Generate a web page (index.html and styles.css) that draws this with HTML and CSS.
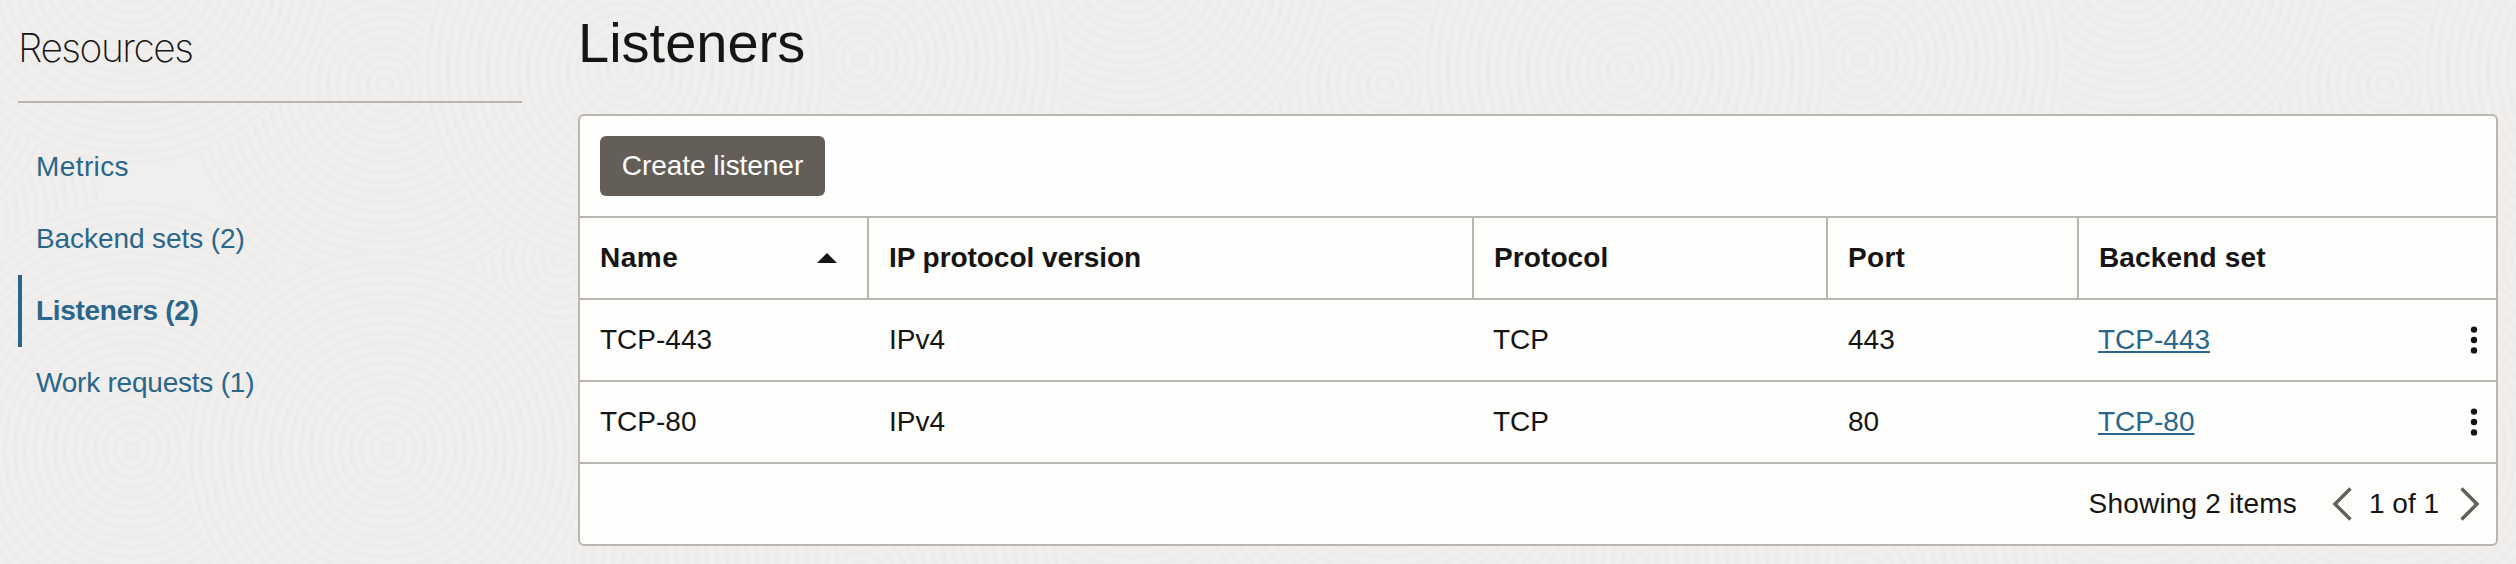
FILE: index.html
```html
<!DOCTYPE html>
<html lang="en">
<head>
<meta charset="utf-8">
<title>Listeners</title>
<link rel="stylesheet" href="styles.css">
</head>
<body>
<svg class="texture" width="2516" height="564" aria-hidden="true">
  <defs>
    <radialGradient id="ripple" gradientUnits="userSpaceOnUse" cx="0" cy="0" r="10" spreadMethod="repeat">
      <stop offset="0" stop-color="#f0efee"/>
      <stop offset=".4" stop-color="#f0efee"/>
      <stop offset=".75" stop-color="#ecebea"/>
      <stop offset="1" stop-color="#f0efee"/>
    </radialGradient>
    <ellipse id="rings" rx="205" ry="200" fill="url(#ripple)"/>
    <g id="tile">
      <use href="#rings" x="860" y="580"/>
      <use href="#rings" x="900" y="220"/>
      <use href="#rings" x="860" y="60"/>
      <use href="#rings" x="640" y="560"/>
      <use href="#rings" x="560" y="260"/>
      <use href="#rings" x="385" y="85"/>
      <use href="#rings" x="625" y="70"/>
      <use href="#rings" x="130" y="-35"/>
      <use href="#rings" x="388" y="650"/>
      <use href="#rings" x="132" y="400"/>
      <use href="#rings" x="132" y="450"/>
      <use href="#rings" x="388" y="450"/>
    </g>
  </defs>
  <use href="#tile" x="-1000"/>
  <use href="#tile" x="2000"/>
  <use href="#tile" x="1000"/>
  <use href="#tile"/>
</svg>
<div class="page">
  <aside class="sidebar">
    <h2 class="sidebar-title">Resources</h2>
    <nav class="nav">
      <a class="nav-item nav-metrics">Metrics</a>
      <a class="nav-item nav-sets">Backend sets (2)</a>
      <a class="nav-item active">Listeners (2)</a>
      <a class="nav-item nav-requests">Work requests (1)</a>
    </nav>
  </aside>
  <main class="content">
    <h1 class="title">Listeners</h1>
    <section class="panel">
      <div class="toolbar"><button class="create">Create listener</button></div>
      <div class="row header">
        <div class="cell name">Name
          <svg width="20" height="10" viewBox="0 0 20 10"><path d="M0 10 10 0l10 10z" fill="#161513"/></svg>
        </div>
        <div class="cell version">IP protocol version</div>
        <div class="cell protocol">Protocol</div>
        <div class="cell port">Port</div>
        <div class="cell backend">Backend set</div>
      </div>
      <div class="row">
        <div class="cell">TCP-443</div>
        <div class="cell wide">IPv4</div>
        <div class="cell">TCP</div>
        <div class="cell wide">443</div>
        <div class="cell"><a class="link">TCP-443</a>
          <svg class="dots" width="8" height="28" viewBox="0 0 8 28" fill="#161513"><circle cx="4" cy="3.6" r="3.2"/><circle cx="4" cy="14" r="3.2"/><circle cx="4" cy="24.4" r="3.2"/></svg>
        </div>
      </div>
      <div class="row">
        <div class="cell">TCP-80</div>
        <div class="cell wide">IPv4</div>
        <div class="cell">TCP</div>
        <div class="cell wide">80</div>
        <div class="cell"><a class="link">TCP-80</a>
          <svg class="dots" width="8" height="28" viewBox="0 0 8 28" fill="#161513"><circle cx="4" cy="3.6" r="3.2"/><circle cx="4" cy="14" r="3.2"/><circle cx="4" cy="24.4" r="3.2"/></svg>
        </div>
      </div>
      <div class="footer">
        <span class="count">Showing 2 items</span>
        <svg class="chevron" width="20" height="34" viewBox="0 0 20 34"><path d="M18.5 1.5 3 17l15.500 15.500" /></svg>
        <span class="pages">1 of 1</span>
        <svg class="chevron" width="20" height="34" viewBox="0 0 20 34"><path d="M1.500 1.500 17 17 1.500 32.500" /></svg>
      </div>
    </section>
  </main>
</div>
</body>
</html>
```
FILE: styles.css
```css
* { box-sizing: border-box; }

body {
  margin: 0;
  height: 564px;
  overflow: hidden;
  background: #f0efee;
  color: #161513;
  font: 28px/40px "Liberation Sans", Arial, sans-serif;
}

.texture {
  position: absolute;
  inset: 0;
  z-index: -1;
}

.page {
  display: grid;
  grid-template-columns: 504px 1920px;
  column-gap: 56px;
  padding-left: 18px;
}

.sidebar-title {
  margin: 0;
  height: 103px;
  padding-top: 24px;
  border-bottom: 2px solid #bbb5b0;
  font: 200 39px/48px Inter, "Liberation Sans", sans-serif;
  letter-spacing: -1.5px;
}

.nav {
  display: flex;
  flex-direction: column;
  padding-top: 28px;
}

.nav-item {
  height: 72px;
  padding-left: 14px;
  border-left: 4px solid transparent;
  line-height: 72px;
  color: #2a668a;
}

.nav-metrics { letter-spacing: 0.4px; }
.nav-sets { letter-spacing: -0.08px; }
.nav-requests { letter-spacing: -0.22px; }

.active {
  border-color: #2a668a;
  font-weight: bold;
  letter-spacing: -0.3px;
}

.title {
  margin: 0;
  height: 114px;
  padding-top: 11px;
  font-size: 56px;
  font-weight: normal;
  line-height: 64px;
}

.panel {
  height: 432px;
  border: 2px solid #bbb5b0;
  border-radius: 6px;
  background: #fdfdfc;
}

.toolbar {
  height: 100px;
  padding: 20px;
}

.create {
  width: 225px;
  height: 60px;
  padding: 0;
  border: 0;
  border-radius: 6px;
  background: #645e59;
  color: #fff;
  font: inherit;
  letter-spacing: -0.05px;
}

.row {
  display: grid;
  grid-template-columns: 289px 605px 354px 251px 1fr;
  height: 82px;
  border-top: 2px solid #bbb5b0;
}

.cell {
  display: flex;
  align-items: center;
  justify-content: space-between;
  padding: 0 18px 0 19px;
}

.cell:first-child,
.cell.wide { padding-left: 20px; }

.header {
  font-weight: bold;
}

.header .cell {
  padding-left: 20px;
  border-right: 2px solid #bbb5b0;
}

.header .cell:last-child { border-right: 0; }

.header .name {
  padding-right: 30px;
  letter-spacing: 0.5px;
}

.header .version { letter-spacing: -0.05px; }
.header .protocol { letter-spacing: 0.1px; }
.header .port { letter-spacing: 0.3px; }
.header .backend { letter-spacing: 0.15px; }

.link {
  color: #2a668a;
  text-decoration: underline;
  text-decoration-thickness: 2px;
  text-underline-offset: 2px;
  text-decoration-skip-ink: none;
}

.footer {
  display: flex;
  align-items: center;
  justify-content: flex-end;
  height: 82px;
  padding-right: 16px;
  border-top: 2px solid #bbb5b0;
}

.count {
  margin-right: 35px;
  letter-spacing: 0.2px;
}

.pages {
  width: 71px;
  margin: 0 20px 0 17px;
  white-space: nowrap;
}

.chevron {
  fill: none;
  stroke: #645e59;
  stroke-width: 3.4;
}
```
